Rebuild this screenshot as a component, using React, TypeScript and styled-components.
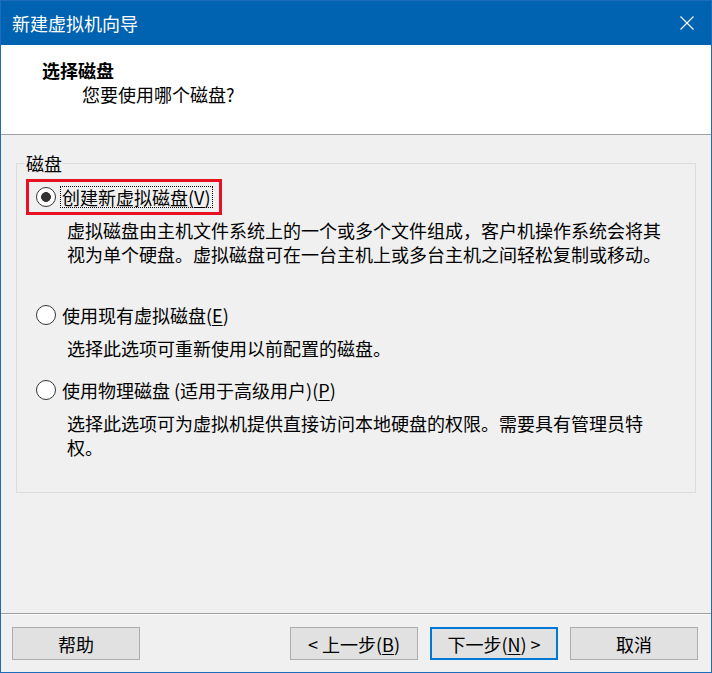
import React from "react";
import styled, { createGlobalStyle } from "styled-components";

const FONT = `"Noto Sans CJK SC", "Noto Sans", sans-serif`;

const GlobalStyle = createGlobalStyle`
  html, body { margin: 0; padding: 0; background: #f0f0f0; }
  body { font-family: ${FONT}; }
  * { box-sizing: border-box; }
`;

const Window = styled.div`
  width: 712px;
  height: 673px;
  border: 1px solid #1c6ebd;
  display: flex;
  flex-direction: column;
  background: #f0f0f0;
  font-family: ${FONT};
  font-size: 18px;
  color: #000;
`;

const TitleBar = styled.div`
  height: 44px;
  flex: none;
  background: #0063b1;
  color: #fff;
  display: flex;
  align-items: center;
  justify-content: space-between;
  padding: 0 17px 0 11px;
`;

const TitleText = styled.span`
  font-size: 18px;
  line-height: 24px;
`;

const CloseIcon = styled.svg`
  display: block;
  width: 14px;
  height: 14px;
`;

const Header = styled.div`
  height: 90px;
  flex: none;
  background: #fff;
  border-bottom: 1px solid #a0a0a0;
  padding-top: 13px;
`;

const HeaderTitle = styled.div`
  font-weight: 700;
  line-height: 24px;
  padding-left: 41px;
`;

const HeaderSub = styled.div`
  line-height: 24px;
  padding-left: 81px;
`;

const Body = styled.div`
  flex: 1;
  padding: 16px 15px 0 15px;
`;

const GroupBox = styled.fieldset`
  margin: 0;
  padding: 0 0 33px 0;
  border: 1px solid #dcdcdc;
  min-width: 0;
`;

const Legend = styled.legend`
  margin-left: 8px;
  padding: 0 1px;
  line-height: 24px;
  font-size: 18px;
`;

const OptionBlock = styled.div<{ $top: number }>`
  margin-top: ${(p) => p.$top}px;
`;

const OptionRow = styled.label<{ $highlight?: boolean }>`
  display: flex;
  width: fit-content;
  align-items: center;
  gap: 4px;
  height: 36px;
  margin-left: 9px;
  padding: 0 6px 0 7px;
  border: 3px solid ${(p) => (p.$highlight ? "#e81123" : "transparent")};
`;

const Radio = styled.input.attrs({ type: "radio" })`
  appearance: none;
  -webkit-appearance: none;
  margin: 0;
  flex: none;
  width: 20px;
  height: 20px;
  border: 1px solid #333;
  border-radius: 50%;
  background: #fff;
  &:checked {
    background: radial-gradient(circle, #333 0 4.6px, #fff 5.2px);
  }
`;

const LabelText = styled.span<{ $focused?: boolean }>`
  line-height: 20px;
  padding: 0 1px;
  border: 1px dotted ${(p) => (p.$focused ? "#000" : "transparent")};
  white-space: nowrap;
`;

const Mnemonic = styled.span`
  text-decoration: underline;
  text-underline-offset: 2px;
`;

const Desc = styled.div`
  margin-top: 3px;
  padding-left: 50px;
  max-width: 650px;
  line-height: 24px;
`;

const ButtonBar = styled.div`
  height: 59px;
  flex: none;
  border-top: 1px solid #a0a0a0;
  box-shadow: inset 0 1px 0 #fbfbfb;
  padding: 13px 13px 0 11px;
  display: flex;
  align-items: flex-start;
  gap: 12px;
`;

const Button = styled.button<{ $default?: boolean; $push?: boolean }>`
  width: 128px;
  height: 33px;
  margin: 0;
  margin-right: ${(p) => (p.$push ? "auto" : "0")};
  padding: 0;
  border-radius: 0;
  background: #e1e1e1;
  border: ${(p) => (p.$default ? "2px solid #0078d7" : "1px solid #adadad")};
  font-family: ${FONT};
  font-size: 18px;
  line-height: 20px;
  color: #000;
`;

const options = [
  {
    key: "new",
    top: 4,
    label: "创建新虚拟磁盘",
    mn: "V",
    desc: "虚拟磁盘由主机文件系统上的一个或多个文件组成，客户机操作系统会将其视为单个硬盘。虚拟磁盘可在一台主机上或多台主机之间轻松复制或移动。",
    checked: true,
  },
  {
    key: "existing",
    top: 31,
    label: "使用现有虚拟磁盘",
    mn: "E",
    desc: "选择此选项可重新使用以前配置的磁盘。",
    checked: false,
  },
  {
    key: "physical",
    top: 12,
    label: "使用物理磁盘 (适用于高级用户)",
    mn: "P",
    desc: "选择此选项可为虚拟机提供直接访问本地硬盘的权限。需要具有管理员特权。",
    checked: false,
  },
];

export default function App() {
  return (
    <>
      <GlobalStyle />
      <Window>
        <TitleBar>
          <TitleText>新建虚拟机向导</TitleText>
          <CloseIcon viewBox="0 0 14 14">
            <path d="M0.5 0.5 L13.5 13.5 M13.5 0.5 L0.5 13.5" stroke="#fff" strokeWidth="1.1" fill="none" />
          </CloseIcon>
        </TitleBar>
        <Header>
          <HeaderTitle>选择磁盘</HeaderTitle>
          <HeaderSub>您要使用哪个磁盘?</HeaderSub>
        </Header>
        <Body>
          <GroupBox>
            <Legend>磁盘</Legend>
            {options.map((o) => (
              <OptionBlock key={o.key} $top={o.top}>
                <OptionRow $highlight={o.checked}>
                  <Radio name="disk" defaultChecked={o.checked} />
                  <LabelText $focused={o.checked}>
                    {o.label}(<Mnemonic>{o.mn}</Mnemonic>)
                  </LabelText>
                </OptionRow>
                <Desc>{o.desc}</Desc>
              </OptionBlock>
            ))}
          </GroupBox>
        </Body>
        <ButtonBar>
          <Button $push>帮助</Button>
          <Button>
            &lt; 上一步(<Mnemonic>B</Mnemonic>)
          </Button>
          <Button $default>
            下一步(<Mnemonic>N</Mnemonic>) &gt;
          </Button>
          <Button>取消</Button>
        </ButtonBar>
      </Window>
    </>
  );
}
